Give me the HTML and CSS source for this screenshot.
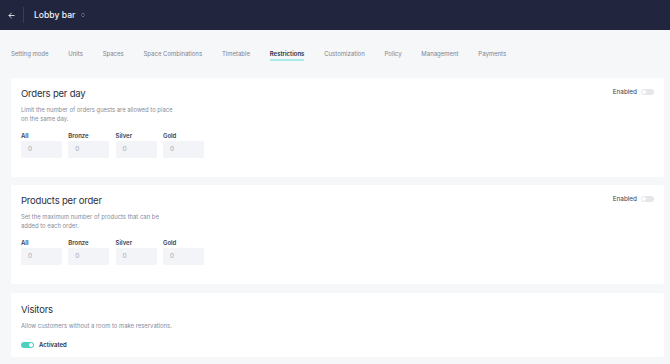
FILE: index.html
```html
<!DOCTYPE html>
<html lang="en">
<head>
<meta charset="utf-8">
<title>Lobby bar – Restrictions</title>
<link rel="stylesheet" href="styles.css">
</head>
<body>
<header class="topbar">
  <span class="back">
    <svg viewBox="0 0 8 8" width="7" height="7"><path d="M7 4H1.2M3.8 1.3L1.1 4l2.7 2.7" fill="none" stroke="#e9eaf0" stroke-width="1" stroke-linecap="round" stroke-linejoin="round"/></svg>
  </span>
  <span class="divider"></span>
  <span class="venue">Lobby bar</span>
  <span class="sort">
    <svg viewBox="0 0 6 8" width="4" height="6"><path d="M1 3L3 1l2 2M1 5l2 2 2-2" fill="none" stroke="#8a8ea4" stroke-width="1" stroke-linecap="round" stroke-linejoin="round"/></svg>
  </span>
</header>

<nav class="tabs">
  <span class="tab">Setting mode</span>
  <span class="tab">Units</span>
  <span class="tab">Spaces</span>
  <span class="tab">Space Combinations</span>
  <span class="tab">Timetable</span>
  <span class="tab active">Restrictions</span>
  <span class="tab">Customization</span>
  <span class="tab">Policy</span>
  <span class="tab">Management</span>
  <span class="tab">Payments</span>
</nav>

<main class="content">
  <section class="card">
    <div class="card-head">
      <h2 class="card-title">Orders per day</h2>
      <div class="switch-wrap"><span class="switch-label">Enabled</span><span class="toggle"></span></div>
    </div>
    <p class="card-desc">Limit the number of orders guests are allowed to place<br>on the same day.</p>
    <div class="fields">
      <label class="field"><span class="field-label">All</span><span class="input">0</span></label>
      <label class="field"><span class="field-label">Bronze</span><span class="input">0</span></label>
      <label class="field"><span class="field-label">Silver</span><span class="input">0</span></label>
      <label class="field"><span class="field-label">Gold</span><span class="input">0</span></label>
    </div>
  </section>

  <section class="card">
    <div class="card-head">
      <h2 class="card-title">Products per order</h2>
      <div class="switch-wrap"><span class="switch-label">Enabled</span><span class="toggle"></span></div>
    </div>
    <p class="card-desc">Set the maximum number of products that can be<br>added to each order.</p>
    <div class="fields">
      <label class="field"><span class="field-label">All</span><span class="input">0</span></label>
      <label class="field"><span class="field-label">Bronze</span><span class="input">0</span></label>
      <label class="field"><span class="field-label">Silver</span><span class="input">0</span></label>
      <label class="field"><span class="field-label">Gold</span><span class="input">0</span></label>
    </div>
  </section>

  <section class="card card-short">
    <div class="card-head">
      <h2 class="card-title">Visitors</h2>
    </div>
    <p class="card-desc">Allow customers without a room to make reservations.</p>
    <div class="activated"><span class="toggle on"></span><span class="activated-label">Activated</span></div>
  </section>
</main>
</body>
</html>
```

FILE: styles.css
```css
* { box-sizing: border-box; }

html, body {
  margin: 0;
  padding: 0;
}

body {
  width: 670px;
  height: 364px;
  overflow: hidden;
  background: #f6f7f9;
  font-family: Inter, "Noto Sans", "Liberation Sans", sans-serif;
  color: #2b2f3d;
}

.topbar {
  height: 30px;
  background: #22253e;
  display: flex;
  align-items: center;
  padding-left: 8px;
}

.back {
  display: flex;
  width: 7px;
  height: 7px;
}

.divider {
  width: 1px;
  height: 16px;
  background: #3a3d55;
  margin-left: 8px;
  margin-right: 10px;
}

.venue {
  color: #f2f3f7;
  font-size: 8.6px;
  font-weight: 500;
  line-height: 10px;
}

.sort {
  display: flex;
  margin-left: 6px;
}

.tabs {
  display: flex;
  gap: 19.8px;
  padding: 19px 0 0 11px;
}

.tab {
  font-size: 6px;
  line-height: 10px;
  color: #7d8292;
  border-bottom: 2px solid transparent;
  white-space: nowrap;
}

.tab.active {
  color: #2b2f3d;
  font-weight: 600;
  border-bottom-color: #a9ebe4;
}

.content {
  display: flex;
  flex-direction: column;
  gap: 8px;
  padding: 17px 6px 0 11px;
}

.card {
  background: #ffffff;
  border-radius: 2px;
  padding: 9px 10px 19px 10px;
}

.card-short {
  margin-top: 1px;
  padding-top: 10px;
  padding-bottom: 7px;
}

.card-head {
  display: flex;
  justify-content: space-between;
  align-items: flex-start;
}

.card-title {
  margin: 0;
  font-size: 9.5px;
  letter-spacing: -0.2px;
  line-height: 14px;
  font-weight: 400;
  color: #2b2f3d;
}

.switch-wrap {
  display: flex;
  align-items: center;
  gap: 4px;
}

.switch-label {
  font-size: 6.4px;
  line-height: 10px;
  color: #3a3e4c;
}

.toggle {
  position: relative;
  width: 13px;
  height: 6px;
  border-radius: 3px;
  background: #e4e6ea;
  display: inline-block;
}

.toggle::after {
  content: "";
  position: absolute;
  top: 1px;
  left: 1px;
  width: 4px;
  height: 4px;
  border-radius: 50%;
  background: #ffffff;
}

.toggle.on {
  background: #4fcfc1;
}

.toggle.on::after {
  left: 8px;
}

.card-desc {
  margin: 4px 0 0 0;
  font-size: 5.9px;
  line-height: 9px;
  color: #878c99;
}

.fields {
  display: flex;
  gap: 6.3px;
  margin-top: 9px;
}

.field {
  display: flex;
  flex-direction: column;
  gap: 1px;
}

.field-label {
  font-size: 6px;
  line-height: 8px;
  font-weight: 600;
  color: #3a3e4c;
}

.input {
  width: 41px;
  height: 17px;
  border-radius: 2px;
  background: #f3f4f7;
  font-size: 6.5px;
  line-height: 17px;
  padding-left: 7px;
  color: #a3a7b1;
}

.activated {
  display: flex;
  align-items: center;
  gap: 5px;
  margin-top: 10px;
  height: 10px;
}

.activated-label {
  font-size: 6px;
  line-height: 10px;
  font-weight: 600;
  color: #2b2f3d;
}
```
